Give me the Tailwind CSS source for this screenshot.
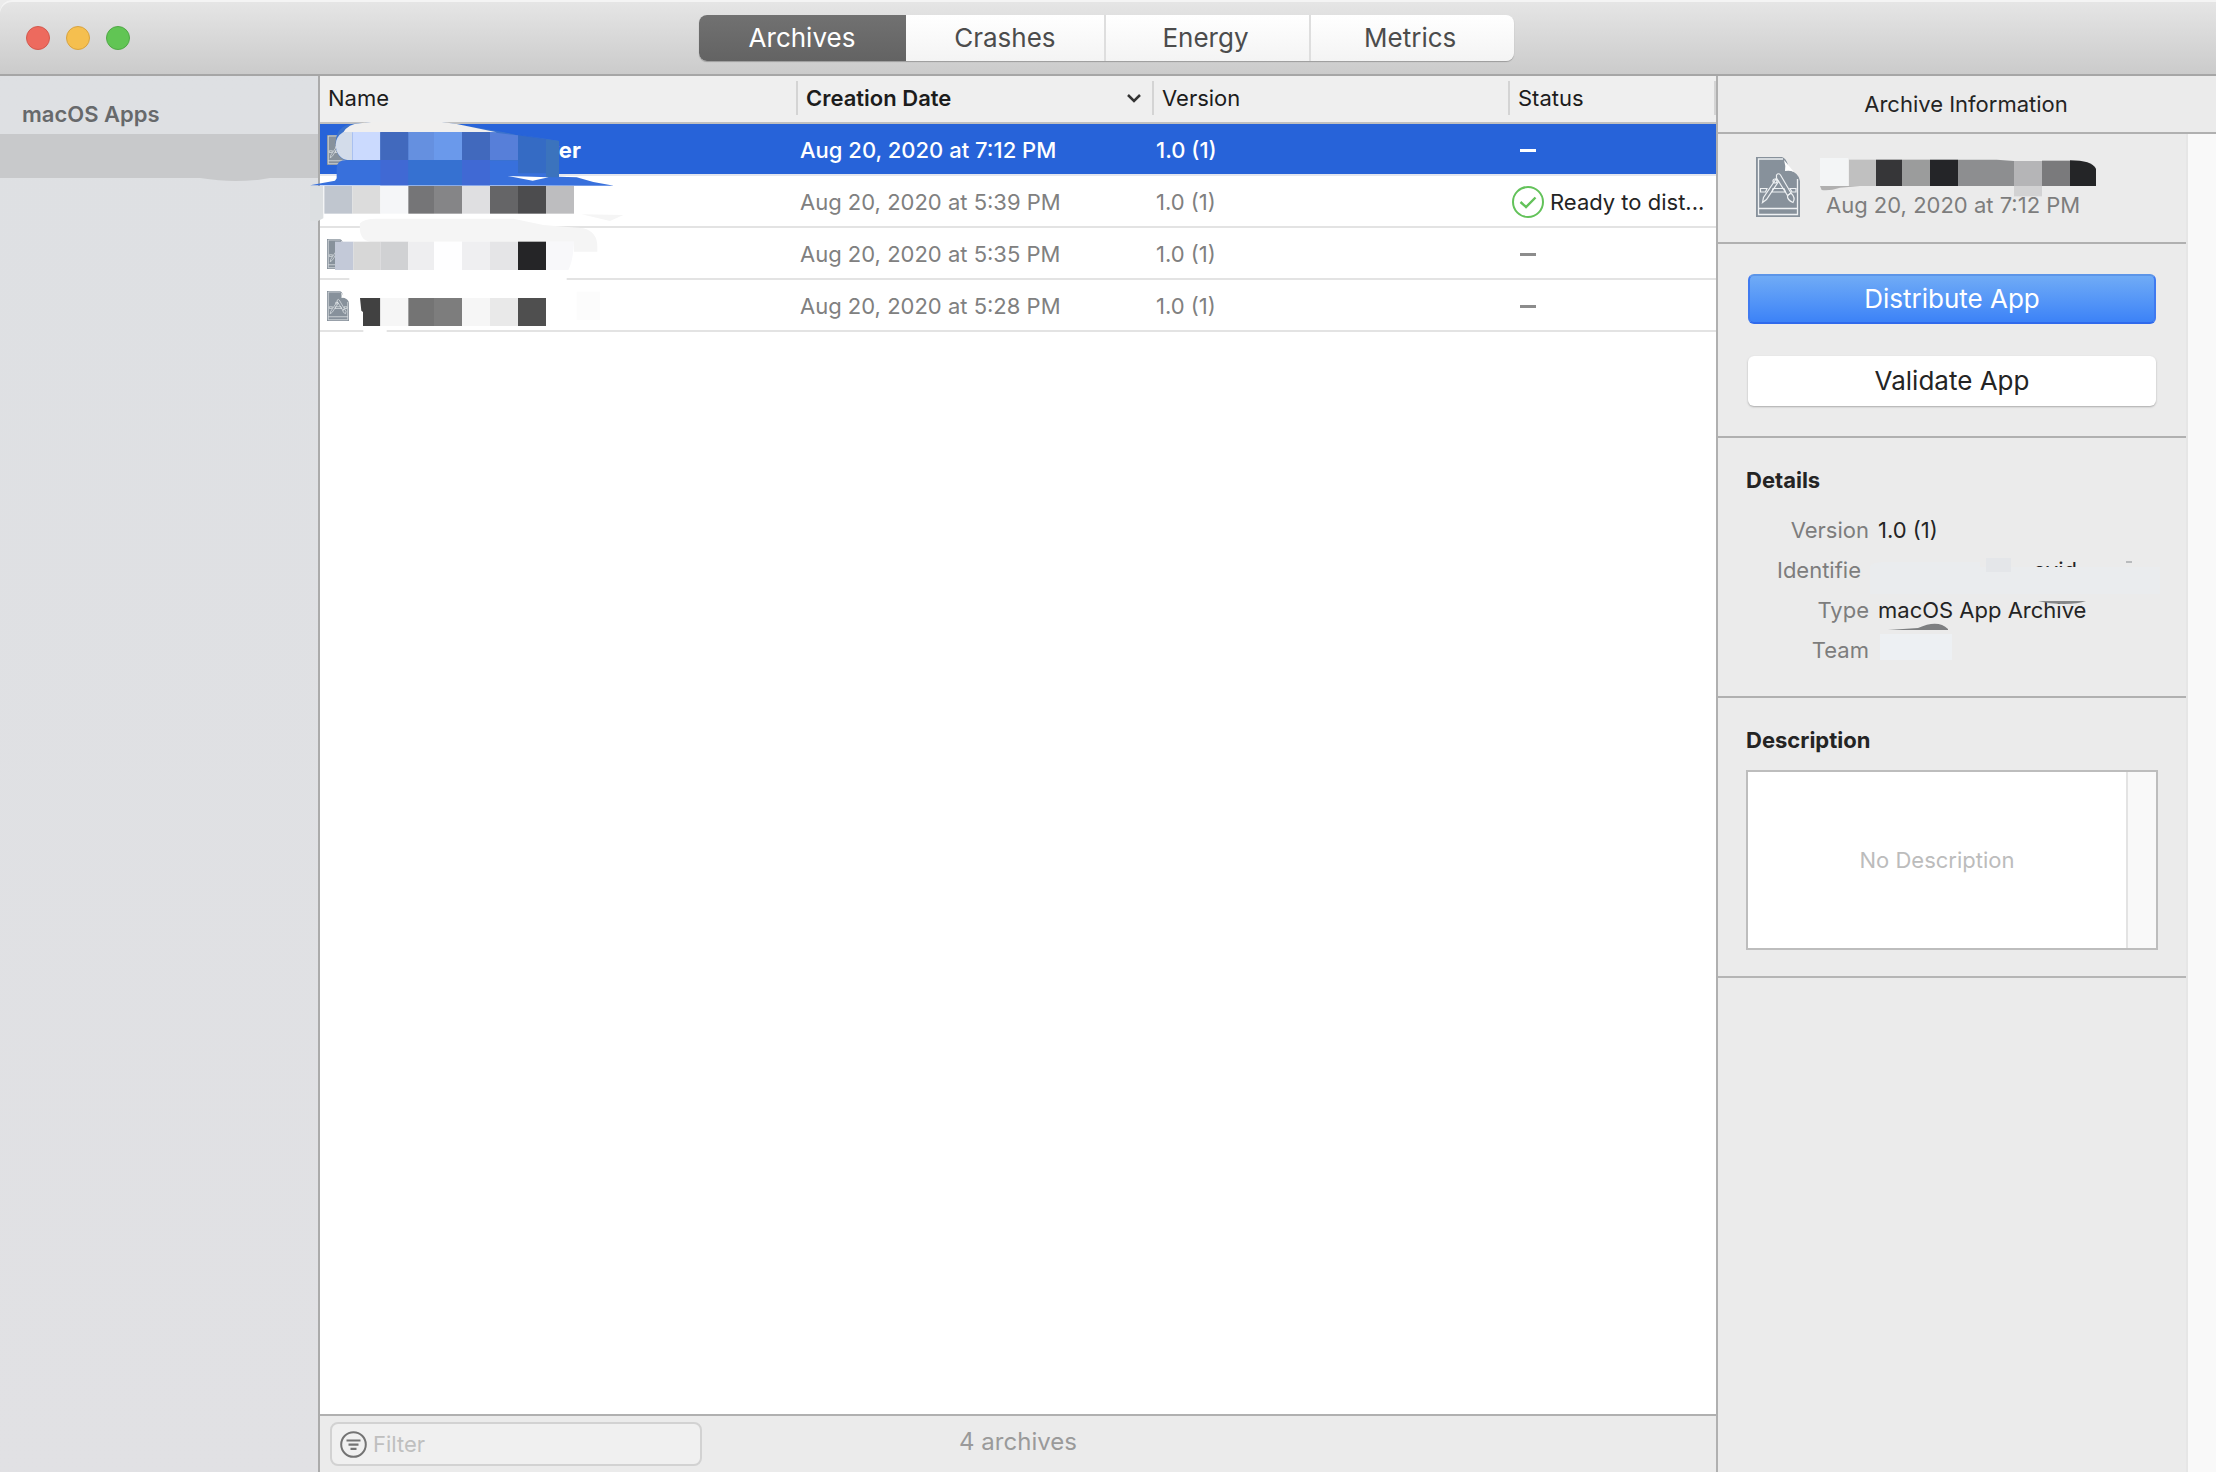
<!DOCTYPE html>
<html lang="en">
<head>
  <meta charset="UTF-8" />
  <meta name="viewport" content="width=device-width, initial-scale=1.0" />
  <title>Archives</title>
  <script src="https://cdn.jsdelivr.net/npm/@tailwindcss/browser@4"></script>
</head>
<body class="h-screen flex flex-col bg-[#ebebeb] font-[Inter,'Liberation_Sans',sans-serif] text-[22px] leading-7 text-[#242424] overflow-hidden">

  <!-- shared document icon -->
  <svg class="hidden">
    <symbol id="doc" viewBox="0 0 44 60">
      <path d="M0 0H26Q30 1 32 8L33 13Q43 16 44 24V60H0Z" fill="#87919b" />
      <path d="M28 3Q30 9 29 14Q34 13 38 15Z" fill="#fff" />
      <path d="M27 2H2.500V57.500H41.500V22M2.500 51.500H41.500" fill="none" stroke="#eef1f3" stroke-width="1.300" />
      <g fill="none" stroke="#eef1f3" stroke-width="1.200">
        <path d="M4.500 31.500H11L9.500 35H4.500ZM17 31.500H28L29.500 35H16ZM34 31.500H40V35H36Z" />
        <path d="M20 22L7.500 40.500L6.500 45.500L10.500 42.500L22.500 24.500Z" />
        <circle cx="19" cy="24" r="2" />
        <path d="M20.500 18Q22.500 15.500 24.500 18L35 36L31.500 38.500L20.500 21Z" />
        <path d="M31.500 38.500Q31 43 37 45.500Q40 41 35 36Z" />
      </g>
    </symbol>
  </svg>

  <header class="h-[76px] shrink-0 relative flex items-center justify-center pt-0.5 pr-1 border-b-2 border-[#a6a6a6] bg-linear-to-b from-[#e6e6e6] to-[#cbcbcb] rounded-tl-xl shadow-[inset_0_2px_0_#f4f4f4]">
    <div class="absolute left-[26px] top-[26px] flex gap-4">
      <button aria-label="Close" class="size-6 rounded-full bg-[#ed6a5e] border border-[#d3594e]"></button>
      <button aria-label="Minimize" class="size-6 rounded-full bg-[#f5bf4f] border border-[#d8a340]"></button>
      <button aria-label="Zoom" class="size-6 rounded-full bg-[#61c554] border border-[#50a846]"></button>
    </div>
    <nav class="flex h-[46px] w-[815px] text-[26px] text-[#4c4c4c] rounded-lg overflow-hidden bg-linear-to-b from-white to-[#f4f4f4] shadow-[0_1px_1px_#9b9b9b]">
      <button class="w-[207px] bg-linear-to-b from-[#717171] to-[#636363] text-white">Archives</button>
      <button class="flex-1">Crashes</button>
      <button class="flex-1 pr-1 border-l-2 border-[#dedede]">Energy</button>
      <button class="flex-1 pr-1 border-l-2 border-[#dedede]">Metrics</button>
    </nav>
  </header>

  <div class="flex flex-1 min-h-0">
    <aside class="w-[318px] shrink-0 bg-linear-to-b from-[#dee0e3] to-[#e1e1e4]">
      <h2 class="h-[58px] pl-[22px] pt-6 font-semibold text-[#67696b]">macOS Apps</h2>
      <div class="h-11 bg-[#c8c9cb]"></div>
      <svg class="w-[318px] h-1" viewBox="0 0 318 4"><path d="M200 0H270Q255 3 235 3Q220 3 200 0Z" fill="#c8c9cb" /></svg>
    </aside>

    <main class="flex-1 min-w-0 flex flex-col relative border-l-2 border-[#ababab] bg-white">
      <table class="w-full table-fixed border-separate border-spacing-0 text-left whitespace-nowrap">
        <colgroup>
          <col />
          <col class="w-[356px]" />
          <col class="w-[356px]" />
          <col class="w-[208px]" />
        </colgroup>
        <thead class="bg-[#efefef] text-[#1c1c1c]">
          <tr>
            <th class="h-12 p-0 pb-0.5 border-b-2 border-[#c0c0c0]">
              <div class="h-[34px] flex items-center pl-2 font-normal">Name</div>
            </th>
            <th class="h-12 p-0 pb-0.5 border-b-2 border-[#c0c0c0]">
              <div class="h-[34px] flex items-center justify-between border-l-2 border-[#d4d4d4] pl-2 pr-2.5 font-semibold">
                Creation Date
                <svg class="w-4 h-3" viewBox="0 0 16 12" fill="none" stroke="#333" stroke-width="2.500"><path d="M2 3L8 9L14 3" /></svg>
              </div>
            </th>
            <th class="h-12 p-0 pb-0.5 border-b-2 border-[#c0c0c0]">
              <div class="h-[34px] flex items-center border-l-2 border-[#d4d4d4] pl-2 font-normal">Version</div>
            </th>
            <th class="h-12 p-0 pb-0.5 border-b-2 border-[#c0c0c0]">
              <div class="h-[34px] flex items-center border-x-2 border-[#d4d4d4] pl-2 font-normal">Status</div>
            </th>
          </tr>
        </thead>
        <tbody class="text-[#808080]">
          <tr class="bg-[#2763d9] text-white font-medium">
            <td class="h-[52px] p-0 pt-0.5 border-b-2 border-[#e3e6ee]">
              <div class="flex items-center">
                <svg class="w-[22px] h-[30px] ml-[7px]"><use href="#doc" /></svg>
                <span class="ml-[197px] font-bold">ver</span>
              </div>
            </td>
            <td class="p-0 pt-0.5 pl-1 border-b-2 border-[#e3e6ee]">Aug 20, 2020 at 7:12 PM</td>
            <td class="p-0 pt-0.5 pl-1 border-b-2 border-[#e3e6ee]">1.0 (1)</td>
            <td class="p-0 pt-0.5 pl-3 border-b-2 border-[#e3e6ee]"><div class="w-4 h-[3px] bg-white"></div></td>
          </tr>
          <tr>
            <td class="h-[52px] p-0 border-b-2 border-[#e3e3e3]"></td>
            <td class="p-0 pt-0.5 pl-1 border-b-2 border-[#e3e3e3]">Aug 20, 2020 at 5:39 PM</td>
            <td class="p-0 pt-0.5 pl-1 border-b-2 border-[#e3e3e3]">1.0 (1)</td>
            <td class="p-0 pt-0.5 pl-1 border-b-2 border-[#e3e3e3]">
              <div class="flex items-center gap-1.5 text-[#242424]">
                <svg class="size-8 shrink-0" viewBox="0 0 32 32" fill="none" stroke="#63c25a" stroke-width="2"><circle cx="16" cy="16" r="15" /><path d="M8.500 16L14 21L23.500 11.500" stroke-width="2.400" /></svg>
                Ready to dist...
              </div>
            </td>
          </tr>
          <tr>
            <td class="h-[52px] p-0 pt-0.5 border-b-2 border-[#e3e3e3]"><svg class="w-[22px] h-[30px] ml-[7px]"><use href="#doc" /></svg></td>
            <td class="p-0 pt-0.5 pl-1 border-b-2 border-[#e3e3e3]">Aug 20, 2020 at 5:35 PM</td>
            <td class="p-0 pt-0.5 pl-1 border-b-2 border-[#e3e3e3]">1.0 (1)</td>
            <td class="p-0 pt-0.5 pl-3 border-b-2 border-[#e3e3e3]"><div class="w-4 h-[3px] bg-[#8c8c8c]"></div></td>
          </tr>
          <tr>
            <td class="h-[52px] p-0 pt-0.5 border-b-2 border-[#e3e3e3]"><svg class="w-[22px] h-[30px] ml-[7px]"><use href="#doc" /></svg></td>
            <td class="p-0 pt-0.5 pl-1 border-b-2 border-[#e3e3e3]">Aug 20, 2020 at 5:28 PM</td>
            <td class="p-0 pt-0.5 pl-1 border-b-2 border-[#e3e3e3]">1.0 (1)</td>
            <td class="p-0 pt-0.5 pl-3 border-b-2 border-[#e3e3e3]"><div class="w-4 h-[3px] bg-[#8c8c8c]"></div></td>
          </tr>
        </tbody>
      </table>

      <!-- scribbles and pixelation over the archive names -->
      <svg class="absolute -left-2.5 top-[34px] w-[320px] h-[230px] pointer-events-none" viewBox="0 0 960 690">
        <path d="M30 198H940V227H30Z" fill="#fff" />
        <path d="M0 226L75 212L80 205V175Q80 150 110 150H745V200L800 202L850 216L912 227Z" fill="#3870dc" />
        <path d="M190 37H390L440 42L600 70L745 92V152H110Q78 145 77 100Q78 48 125 42Z" fill="#3b72cd" />
        <path d="M600 70L560 60L760 98L745 110Z" fill="#2763d9" />
        <path d="M190 35H390L440 42L560 67H100Q115 42 150 40Z" fill="#f0efee" />
        <path d="M127 66H100Q77 80 77 105Q80 145 112 150H127Z" fill="#d3dcea" />
        <path d="M127 66H211V150H127Z" fill="#cbdafe" />
        <path d="M211 66H295V150H211Z" fill="#4169bd" />
        <path d="M295 66H372V150H295Z" fill="#6590e0" />
        <path d="M372 66H456V150H372Z" fill="#6a99eb" />
        <path d="M456 66H540V150H456Z" fill="#4169bd" />
        <path d="M540 66L624 76V150H540Z" fill="#577fd9" />
        <path d="M624 76L708 88V190H624Z" fill="#356bc4" />
        <path d="M708 88L747 93V202H708Z" fill="#3b73bd" />
        <path d="M211 150H295V226H211ZM456 150H540V226H456Z" fill="#4069d4" />
        <path d="M295 150H456V226H295Z" fill="#3671d1" />
        <path d="M594 198L716 202L668 212Z" fill="#fff" />
        <path d="M0 228H40V325L24 333H0Z" fill="#dcdfe1" />
        <path d="M43 228H127V311H43Z" fill="#c0c6cf" />
        <path d="M127 228H211V311H127Z" fill="#dcdcdc" />
        <path d="M211 228H295V311H211Z" fill="#f5f6f8" />
        <path d="M295 228H372V311H295Z" fill="#757577" />
        <path d="M372 228H456V311H372Z" fill="#858587" />
        <path d="M456 228H540V311H456Z" fill="#dfdfe1" />
        <path d="M540 228H624V311H540Z" fill="#656567" />
        <path d="M624 228H708V311H624Z" fill="#4c4c4e" />
        <path d="M708 228H792V311H708Z" fill="#bdbdbf" />
        <path d="M815 313L940 315L900 333Z" fill="#f5f5f5" />
        <path d="M150 340Q160 326 200 326H610L700 345L820 355Q862 365 862 410V425H792V395H180Q145 390 150 340Z" fill="#f5f5f5" />
        <path d="M118 500H770V515H118ZM160 655H230V668H160Z" fill="#fff" />
        <path d="M75 395H130V480H75Z" fill="#c3c9d8" />
        <path d="M130 395H211V480H130Z" fill="#d7d7d7" />
        <path d="M211 395H295V480H211Z" fill="#d0d1d3" />
        <path d="M295 395H372V480H295Z" fill="#eeeef0" />
        <path d="M372 395H456V480H372Z" fill="#fefeff" />
        <path d="M456 395H540V480H456Z" fill="#efeff1" />
        <path d="M540 395H624V480H540Z" fill="#e5e5e7" />
        <path d="M624 395H708V480H624Z" fill="#252527" />
        <path d="M708 395H792Q790 450 775 480H708Z" fill="#f8f8fa" />
        <path d="M150 564H211V648H159V606L154 602Z" fill="#414141" />
        <path d="M211 564H295V648H211ZM456 564H540V648H456Z" fill="#f6f6f6" />
        <path d="M295 564H372V648H295Z" fill="#747474" />
        <path d="M372 564H456V648H372Z" fill="#7d7d7d" />
        <path d="M540 564H624V648H540Z" fill="#e9e9e9" />
        <path d="M624 564H708V648H624Z" fill="#4f4f4f" />
        <path d="M800 545H870V630H800Z" fill="#fcfcfc" />
      </svg>

      <footer class="mt-auto h-[58px] grid grid-cols-3 items-center pl-2.5 border-t-2 border-[#b0b0b0] bg-[#ebebeb]">
        <label class="w-[372px] h-11 flex items-center gap-1.5 pl-2 border-2 border-[#d2d2d2] rounded-lg bg-[#f0f0f0]">
          <svg class="size-[27px] shrink-0" viewBox="0 0 27 27" fill="none" stroke="#737373" stroke-width="2"><circle cx="13.500" cy="13.500" r="12.300" /><path d="M6.500 9.500H20.500M8.500 13.700H18.500M10.500 17.900H16.500" stroke-width="2.200" /></svg>
          <input type="text" aria-label="Filter" placeholder="Filter" class="flex-1 min-w-0 outline-none placeholder:text-[#bfbfbf]" />
        </label>
        <p class="text-center text-[24px] text-[#9a9a9a] pb-1 pr-2.5">4 archives</p>
      </footer>
    </main>

    <aside class="w-[500px] shrink-0 flex flex-col border-l-2 border-[#b0b0b0]">
      <h2 class="h-[58px] shrink-0 flex items-center justify-center pr-0.5 border-b-2 border-[#b0b0b0]">Archive Information</h2>
      <div class="flex-1 flex">
        <div class="flex-1 min-w-0">
          <section class="relative h-[110px] flex pl-[38px] pt-[23px] border-b-2 border-[#b0b0b0]">
            <svg class="w-11 h-[60px]"><use href="#doc" /></svg>
            <p class="pl-[26px] pt-[34px] text-[#7d7d7d]">Aug 20, 2020 at 7:12 PM</p>
            <svg class="absolute left-[102px] top-[23px] w-[280px] h-[42px]" viewBox="0 0 840 126">
              <path d="M0 3H85V87H0Z" fill="#f3f5f6" />
              <path d="M0 87H120L60 92Q30 102 5 99Z" fill="#b0b0b0" />
              <path d="M87 8H168V87H87Z" fill="#c0c0c0" />
              <path d="M168 8H246V87H168Z" fill="#363638" />
              <path d="M246 8H330V87H246Z" fill="#9b9c9c" />
              <path d="M330 8H414V87H330Z" fill="#242528" />
              <path d="M414 8H530L582 12V87H414Z" fill="#8d8e90" />
              <path d="M582 12H666V87H582Z" fill="#b5b5b7" />
              <path d="M582 87H666V118H582Z" fill="#d2d2d3" />
              <path d="M666 11H750V87H666Z" fill="#7a7a7c" />
              <path d="M750 10Q815 10 828 35V87H750Z" fill="#242527" />
            </svg>
          </section>

          <section class="h-[194px] flex flex-col gap-8 pt-[30px] px-[30px] text-[26px] border-b-2 border-[#b0b0b0]">
            <button class="h-[50px] rounded-md border-2 border-t-[#5c95e8] border-x-[#3f7af0] border-b-[#2f6aec] bg-linear-to-b from-[#70abf6] to-[#3c82f7] text-white">Distribute App</button>
            <button class="h-[50px] rounded-md bg-white shadow-[0_1px_2px_#aaa]">Validate App</button>
          </section>

          <section class="relative h-[260px] pt-7 px-7 border-b-2 border-[#b0b0b0]">
            <h3 class="font-bold">Details</h3>
            <dl class="pt-4 grid grid-cols-[123px_1fr] gap-x-[9px] leading-10">
              <dt class="text-right text-[#7d7d7d]">Version</dt>
              <dd>1.0 (1)</dd>
              <dt class="pr-2 text-right text-[#7d7d7d]">Identifie</dt>
              <dd class="pl-[155px]">ovid</dd>
              <dt class="text-right text-[#7d7d7d]">Type</dt>
              <dd>macOS App Archive</dd>
              <dt class="text-right text-[#7d7d7d]">Team</dt>
              <dd></dd>
            </dl>
            <svg class="absolute left-[152px] top-[120px] w-[300px] h-[112px]" viewBox="0 0 300 112">
              <path d="M0 8Q4 4 12 4H110V9H290V36H0Z" fill="#eaecee" />
              <path d="M116 0H141V14H116Z" fill="#e4e6e9" />
              <path d="M256 3H262V5H256Z" fill="#b9bbbd" />
              <path d="M168 43H216Q208 46 194 46Q180 46 168 43Z" fill="#858789" />
              <path d="M18 72L48 70Q68 61 78 71V72Z" fill="#7d7f81" />
              <path d="M10 76H82V102H10Z" fill="#edf0f3" />
            </svg>
          </section>

          <section class="h-[280px] pt-7 px-7 border-b-2 border-[#b5b5b5]">
            <h3 class="font-bold"><label for="description">Description</label></h3>
            <div class="mt-4 h-[180px] flex border-2 border-[#bdbdbd] bg-white">
              <textarea id="description" placeholder="No Description" class="flex-1 min-w-0 resize-none pt-[74px] text-center outline-none placeholder:text-[#bcbcbc]"></textarea>
              <div class="w-[30px] bg-[#f9f9f9] border-l-2 border-[#e3e3e3]"></div>
            </div>
          </section>
        </div>
        <div class="w-[30px] bg-[#f9f9f9] border-l-2 border-[#e6e6e6]"></div>
      </div>
    </aside>
  </div>

</body>
</html>
